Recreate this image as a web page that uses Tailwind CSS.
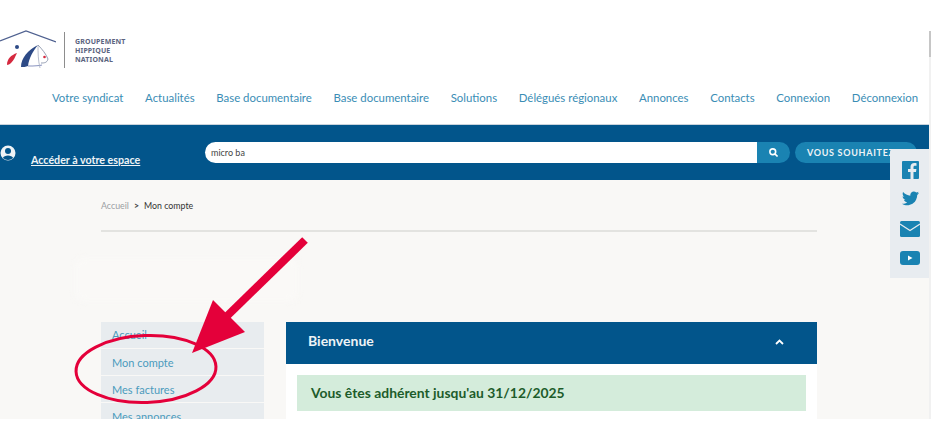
<!DOCTYPE html>
<html lang="fr">
<head>
    <meta charset="UTF-8">
    <title>Mon compte</title>
    <script src="https://cdn.jsdelivr.net/npm/@tailwindcss/browser@4"></script>
</head>
<body class="bg-white font-['Lato','Noto_Sans',sans-serif] overflow-hidden">
<div class="relative w-[931px] h-[431px] overflow-hidden">
    <div class="w-[929px] h-[419px] overflow-hidden flex flex-col bg-[#f9f8f6]">

        <!-- header -->
        <header class="bg-white h-[125px] shrink-0 flex flex-col border-b border-[#c9d3dc]">
            <div class="flex items-center h-[40px] mt-[30px]">
                <svg class="w-[56px] h-[40px] shrink-0" viewBox="0 0 56 40" fill="none">
                    <path d="M0 11 L26 1 L56 12" stroke="#4f6190" stroke-width="1.300"/>
                    <path d="M7 35 C7 29 11 25 17 23 C15 27 14 30 11 33 C10 34 8 35 7 35Z" fill="#d5293f"/>
                    <circle cx="17" cy="17" r="2" fill="#2d4a86"/>
                    <path d="M21 37 C21 28 28 20 38 15 C33 21 29 28 28 36 C26 37 23 37 21 37Z" fill="#2d4a86"/>
                    <path d="M28 36 C33 36 38 36 42 35" stroke="#8a94c0" stroke-width="1.200"/>
                    <path d="M38 15 C38 22 38 30 40 38" stroke="#a7aec2" stroke-width="0.800"/>
                    <path d="M38 15 C42 19 46 24 48 29 C47 33 44 33 41 33" stroke="#8a94aa" stroke-width="0.900"/>
                    <circle cx="44.500" cy="27" r="1.300" fill="#d5293f"/>
                </svg>
                <div class="w-px h-[36px] bg-[#8d8d8d] ml-[8px] mr-[10px]"></div>
                <div class="text-[7px] leading-[9px] font-bold text-[#5b6480] font-['Noto_Sans',sans-serif] tracking-[0.15px]">GROUPEMENT<br>HIPPIQUE<br>NATIONAL</div>
            </div>
            <nav class="flex gap-[21.700px] pl-[52px] mt-[20px] text-[11.400px] leading-[16px] text-[#3a8db5] whitespace-nowrap">
                <a>Votre syndicat</a>
                <a>Actualités</a>
                <a>Base documentaire</a>
                <a>Base documentaire</a>
                <a>Solutions</a>
                <a>Délégués régionaux</a>
                <a>Annonces</a>
                <a>Contacts</a>
                <a>Connexion</a>
                <a>Déconnexion</a>
            </nav>
        </header>

        <!-- barre de recherche -->
        <div class="bg-[#02558b] h-[55px] shrink-0 flex items-start relative">
            <svg class="w-[16px] h-[16px] mt-[20px] shrink-0" viewBox="0 0 16 16">
                <circle cx="8" cy="8" r="7.500" fill="#eef3f6"/>
                <circle cx="8" cy="6" r="3" fill="#02558b"/>
                <path d="M2.800 13 C4 9.500 12 9.500 13.200 13 C10 15.500 6 15.500 2.800 13Z" fill="#02558b"/>
            </svg>
            <a class="ml-[15px] mt-[28px] w-[174px] text-[10.700px] leading-[14px] font-bold text-[#eef3f6] underline whitespace-nowrap">Accéder à votre espace</a>
            <div class="mt-[17px] flex h-[21px] w-[585px]">
                <div class="flex-1 bg-white rounded-l-full pl-[6px] text-[9px] leading-[21px] text-[#444]">micro ba</div>
                <div class="w-[33px] bg-[#1a83b2] rounded-r-full flex items-center justify-center">
                    <svg class="w-[9px] h-[9px]" viewBox="0 0 10 10" fill="none" stroke="#fff" stroke-width="1.800"><circle cx="4.200" cy="4.200" r="3.200"/><path d="M6.700 6.700 L9.500 9.500"/></svg>
                </div>
            </div>
            <div class="ml-[5px] mt-[17px] h-[21px] w-[122px] bg-[#1a83b2] rounded-full pl-[12px] text-[9px] leading-[21px] font-bold tracking-[0.7px] text-[#eef3f6] whitespace-nowrap">VOUS SOUHAITEZ</div>
        </div>

        <!-- contenu -->
        <div class="flex-1 px-[101px] mr-[-1px] relative">
            <div class="w-[716px]">
                <div class="h-[52px] pt-[20px] flex items-start gap-[4px] text-[8.800px] leading-[12px] whitespace-nowrap border-b-2 border-[#e3e3e0]">
                    <span class="text-[#9a9ea2]">Accueil</span>
                    <span class="text-[#444] font-bold px-[1px]">&gt;</span>
                    <span class="text-[#333]">Mon compte</span>
                </div>
                <div class="h-[43px] w-[223px] mt-[26px] ml-[-26px] bg-[#faf9f7] rounded-[8px] blur-[3px]"></div>
                <div class="flex gap-[22px] mt-[21px]">
                    <ul class="w-[163px] shrink-0 flex flex-col gap-px text-[11px] leading-[26px] text-[#4b9bbd]">
                        <li class="bg-[#e8ecef] h-[26px] pl-[11px]">Accueil</li>
                        <li class="bg-[#e8ecef] h-[26px] pl-[11px] pt-[1px]">Mon compte</li>
                        <li class="bg-[#e8ecef] h-[26px] pl-[11px] pt-[1px]">Mes factures</li>
                        <li class="bg-[#e8ecef] h-[26px] pl-[11px] pt-[1px]">Mes annonces</li>
                    </ul>
                    <section class="w-[531px] bg-white h-[120px]">
                        <div class="h-[42px] bg-[#02558b] flex items-center justify-between pl-[22px] pr-[33px]">
                            <h2 class="text-[14px] font-bold text-[#eef3f6] mb-[5px]">Bienvenue</h2>
                            <svg class="w-[9px] h-[6px] mb-[2px]" viewBox="0 0 9 6" fill="none" stroke="#fff" stroke-width="1.800"><path d="M1 5 L4.500 1.500 L8 5"/></svg>
                        </div>
                        <div class="mx-[11px] mt-[11px] h-[36px] bg-[#d4ecdb] pl-[14px] text-[13.900px] leading-[36px] font-bold text-[#1d5c2b]">Vous êtes adhérent jusqu'au 31/12/2025</div>
                    </section>
                </div>
            </div>
        </div>
    </div>

    <!-- barre de défilement -->
    <div class="absolute left-[929px] top-[31px] w-[2px] h-[388px] bg-[#f1f1f1]">
        <div class="h-[26px] bg-[#c6c6c6]"></div>
    </div>

    <!-- réseaux sociaux -->
    <aside class="absolute left-[890px] top-[149px] w-[39px] h-[129px] bg-[#e8ecf0] rounded-tl-[3px] flex flex-col items-center pt-[12px] pl-[1px]">
        <svg class="w-[17px] h-[18px]" viewBox="0 0 17 18"><rect width="17" height="18" rx="1" fill="#1a83b2"/><path d="M11.500 18 V11 H14 L14.400 8 H11.500 V6.300 C11.500 5.300 11.900 4.800 13 4.800 H14.500 V2.200 C13.900 2.100 13.200 2 12.400 2 C10 2 8.500 3.400 8.500 5.800 V8 H6 V11 H8.500 V18Z" fill="#e8ecf0"/></svg>
        <svg class="w-[17px] h-[15px] mt-[12px]" viewBox="0 0 24 20"><path d="M24 2.400 C23.100 2.800 22.200 3 21.200 3.200 C22.200 2.600 23 1.600 23.400 .400 C22.400 1 21.300 1.400 20.200 1.600 C18.300 -.400 15.200 -.500 13.200 1.400 C11.900 2.600 11.400 4.400 11.800 6.100 C7.800 5.900 4.100 4 1.600 .900 C.300 3.200 1 6.100 3.200 7.500 C2.400 7.500 1.600 7.300 .900 6.900 C.900 9.300 2.600 11.300 4.900 11.800 C4.200 12 3.400 12 2.700 11.900 C3.300 13.900 5.200 15.300 7.300 15.400 C5.100 17.100 2.500 17.800 0 17.500 C7.400 22.200 17 18.700 20 11.500 C21 9.300 21.500 7 21.500 5 C22.600 4.300 23.400 3.400 24 2.400Z" fill="#1a83b2"/></svg>
        <svg class="w-[20px] h-[16px] mt-[15px]" viewBox="0 0 20 16"><rect width="20" height="16" rx="1.500" fill="#1a83b2"/><path d="M0 3 L10 9.500 L20 3" fill="none" stroke="#e8ecf0" stroke-width="1.200"/></svg>
        <svg class="w-[20px] h-[14px] mt-[14px]" viewBox="0 0 20 14"><rect width="20" height="14" rx="3" fill="#1a83b2"/><path d="M8 4.500 L12.500 7 L8 9.500Z" fill="#fff"/></svg>
    </aside>

    <!-- annotation -->
    <svg class="absolute left-0 top-0 pointer-events-none" width="931" height="431" viewBox="0 0 931 431" fill="none">
        <path d="M305 240 L225 318" stroke="#e4003a" stroke-width="8"/>
        <path d="M192 353 L213 300 L245 332Z" fill="#e4003a"/>
        <ellipse cx="146" cy="369" rx="70" ry="33.500" stroke="#e4003a" stroke-width="3" transform="rotate(-2 146 369)"/>
    </svg>
</div>
</body>
</html>
